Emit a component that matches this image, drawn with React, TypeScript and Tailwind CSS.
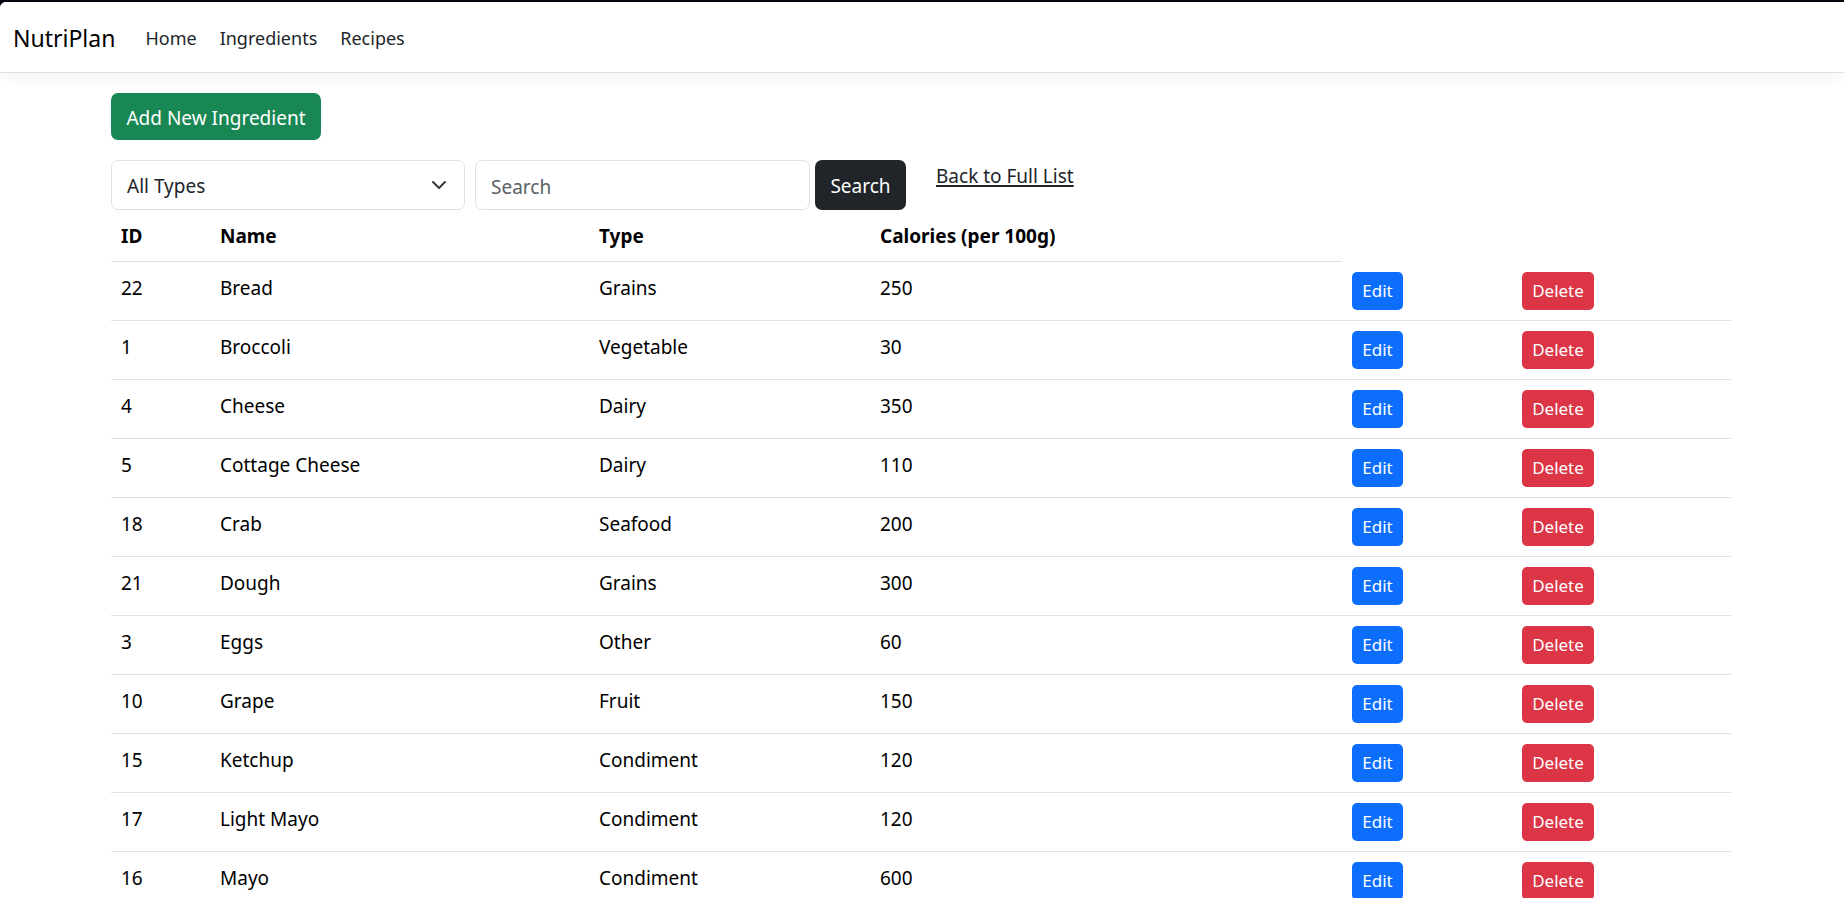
import { ReactNode, useState } from "react";

type Ingredient = { id: number; name: string; type: string; calories: number };

const INGREDIENTS: Ingredient[] = [
  { id: 22, name: "Bread", type: "Grains", calories: 250 },
  { id: 1, name: "Broccoli", type: "Vegetable", calories: 30 },
  { id: 4, name: "Cheese", type: "Dairy", calories: 350 },
  { id: 5, name: "Cottage Cheese", type: "Dairy", calories: 110 },
  { id: 18, name: "Crab", type: "Seafood", calories: 200 },
  { id: 21, name: "Dough", type: "Grains", calories: 300 },
  { id: 3, name: "Eggs", type: "Other", calories: 60 },
  { id: 10, name: "Grape", type: "Fruit", calories: 150 },
  { id: 15, name: "Ketchup", type: "Condiment", calories: 120 },
  { id: 17, name: "Light Mayo", type: "Condiment", calories: 120 },
  { id: 16, name: "Mayo", type: "Condiment", calories: 600 },
];

function Navbar() {
  return (
    <nav className="flex h-[71px] items-center rounded-tl-md border-b border-[#dee2e6] bg-white pt-0.5 pl-[13px] shadow-[0_5px_15px_rgba(0,0,0,0.05)]">
      <a href="#" className="mr-[30px] text-[23px] leading-[38px] text-black">
        NutriPlan
      </a>
      <ul className="flex gap-[23px] text-[18px] leading-[30px] text-[#212529]">
        <li><a href="#home">Home</a></li>
        <li><a href="#ingredients">Ingredients</a></li>
        <li><a href="#recipes">Recipes</a></li>
      </ul>
    </nav>
  );
}

function HeadCell({ children }: { children: ReactNode }) {
  return (
    <th scope="col" className="h-[52px] border-b border-[#dee2e6] px-[10px] pt-[11px] text-left align-top font-bold">
      {children}
    </th>
  );
}

function TextCell({ children }: { children: ReactNode }) {
  return <td className="px-[10px] pt-[11px]">{children}</td>;
}

function Row({ item }: { item: Ingredient }) {
  return (
    <tr className="align-top">
      <TextCell>{item.id}</TextCell>
      <TextCell>{item.name}</TextCell>
      <TextCell>{item.type}</TextCell>
      <TextCell>{item.calories}</TextCell>
      <td className="p-[10px]">
        <button type="button" className="block h-[38px] w-[51px] rounded-[5px] bg-[#0d6efd] text-[17px] leading-[26px] text-white">
          Edit
        </button>
      </td>
      <td className="p-[10px]">
        <button type="button" className="block h-[38px] w-[72px] rounded-[5px] bg-[#dc3545] text-[17px] leading-[26px] text-white">
          Delete
        </button>
      </td>
    </tr>
  );
}

export default function App() {
  const [query, setQuery] = useState("");
  const [type, setType] = useState("");
  const types = Array.from(new Set(INGREDIENTS.map((i) => i.type)));

  return (
    <div className="bg-[#05030c] pt-0.5 font-['Noto_Sans','Open_Sans',sans-serif] text-[19px] leading-[30px]">
      <div className="min-h-screen rounded-tl-md bg-white">
        <Navbar />
        <main className="mx-auto max-w-[1650px] pt-5 pr-4 pl-3.5">
          <button type="button" className="block h-[47px] w-[210px] rounded-[7px] bg-[#198754] pt-0.5 text-white">
            Add New Ingredient
          </button>
          <form className="mt-5 flex items-start" onSubmit={(e) => e.preventDefault()}>
            <div className="relative w-[354px]">
              <select
                aria-label="Type"
                value={type}
                onChange={(e) => setType(e.target.value)}
                className="h-[50px] w-full appearance-none rounded-[7px] border border-[#dee2e6] bg-white pt-0.5 pr-11 pl-[15px] text-[#212529]"
              >
                <option value="">All Types</option>
                {types.map((t) => (
                  <option key={t} value={t}>{t}</option>
                ))}
              </select>
              <svg
                viewBox="0 0 16 16"
                aria-hidden="true"
                className="pointer-events-none absolute top-[17px] right-[18px] size-4"
                fill="none"
                stroke="#343a40"
                strokeWidth="2"
                strokeLinecap="round"
                strokeLinejoin="round"
              >
                <path d="m2 5 6 6 6-6" />
              </svg>
            </div>
            <input
              type="search"
              aria-label="Search"
              placeholder="Search"
              value={query}
              onChange={(e) => setQuery(e.target.value)}
              className="ml-[10px] h-[50px] w-[335px] rounded-[7px] border border-[#dee2e6] px-[15px] pt-1 text-[#212529] placeholder:text-[#596066]"
            />
            <button type="submit" className="ml-[5px] h-[50px] w-[91px] rounded-[7px] bg-[#212529] pt-0.5 text-white">
              Search
            </button>
            <a href="#all" className="ml-[30px] pt-px text-[#212529] underline decoration-2 underline-offset-2">
              Back to Full List
            </a>
          </form>
          <table className="w-full table-fixed border-separate border-spacing-0 text-black [&_td]:border-b [&_td]:border-[#dee2e6]">
            <colgroup>
              <col className="w-[99px]" />
              <col className="w-[379px]" />
              <col className="w-[281px]" />
              <col className="w-[472px]" />
              <col className="w-[170px]" />
              <col />
            </colgroup>
            <thead>
              <tr>
                <HeadCell>ID</HeadCell>
                <HeadCell>Name</HeadCell>
                <HeadCell>Type</HeadCell>
                <HeadCell>Calories (per 100g)</HeadCell>
              </tr>
            </thead>
            <tbody>
              {INGREDIENTS.map((item) => (
                <Row key={item.id} item={item} />
              ))}
            </tbody>
          </table>
        </main>
      </div>
    </div>
  );
}
